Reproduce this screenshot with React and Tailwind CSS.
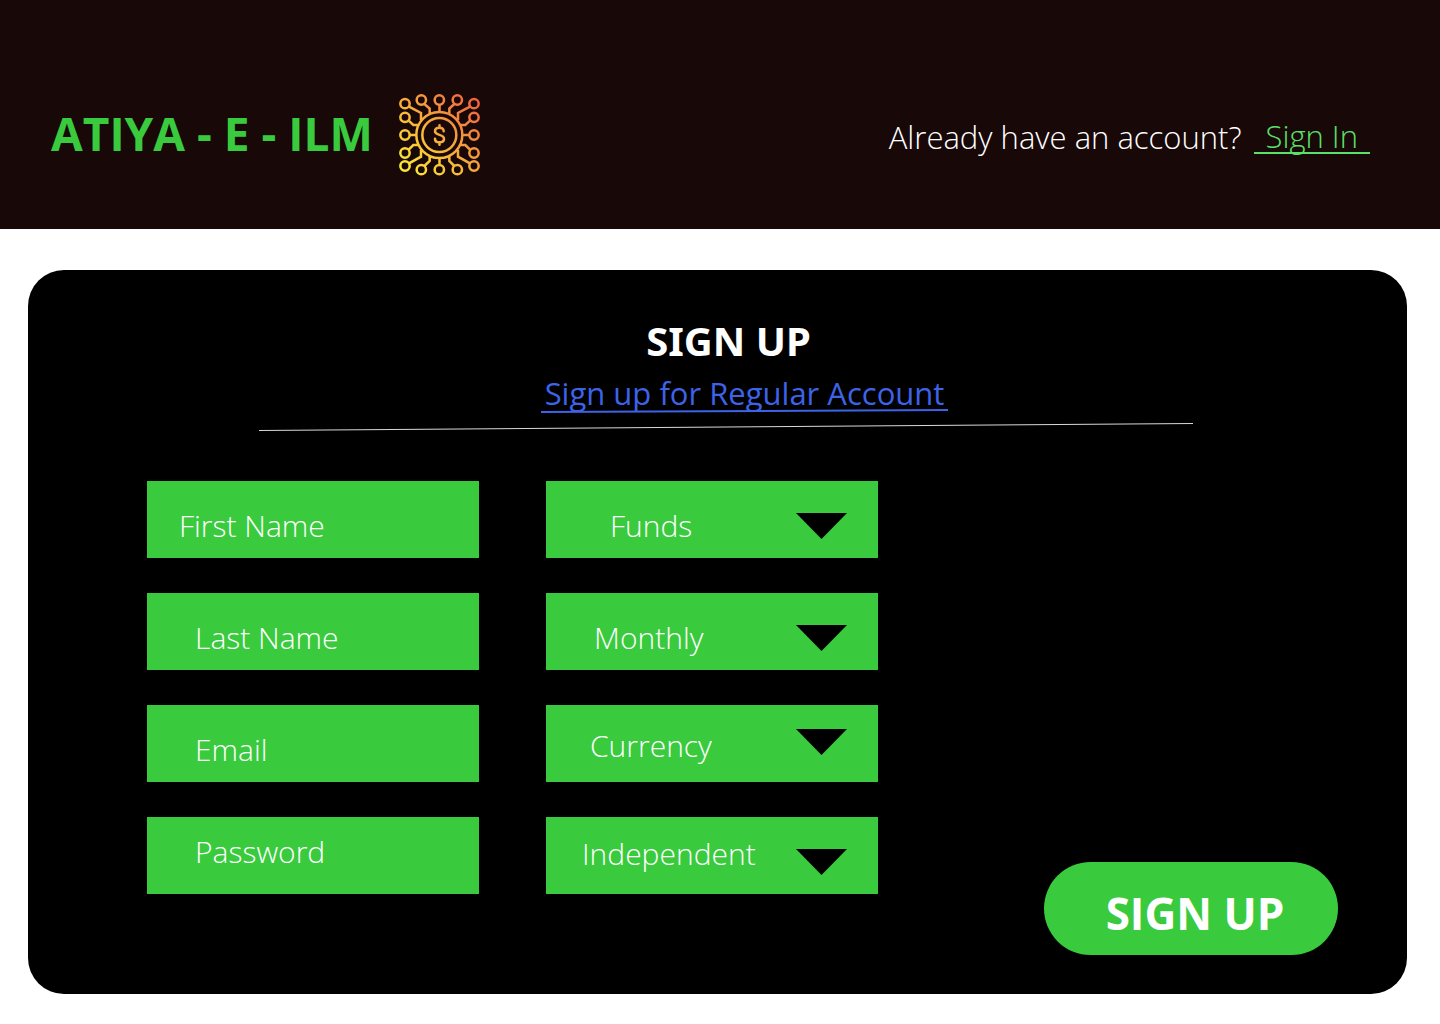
const textFields = [
  { id: 'first-name', label: 'First Name', type: 'text', pad: 'pl-8 pt-3' },
  { id: 'last-name', label: 'Last Name', type: 'text', pad: 'pl-12 pt-3' },
  { id: 'email', label: 'Email', type: 'email', pad: 'pl-12 pt-3' },
  { id: 'password', label: 'Password', type: 'password', pad: 'pl-12 pb-2' },
];

const selectFields = [
  { id: 'funds', label: 'Funds', pad: 'pl-16 pt-3', arrow: 'top-8' },
  { id: 'frequency', label: 'Monthly', pad: 'pl-12 pt-3', arrow: 'top-8' },
  { id: 'currency', label: 'Currency', pad: 'pl-11 pt-1', arrow: 'top-6' },
  { id: 'dependency', label: 'Independent', pad: 'pl-9 pb-1', arrow: 'top-8' },
];

const nodes = [
  [45, 56], [94, 45], [148, 45], [202, 45], [252, 56],
  [45, 97], [252, 97], [45, 150], [252, 150], [45, 204], [252, 204],
  [45, 243], [94, 254], [148, 254], [202, 254], [252, 243],
];

function CoinNetwork() {
  return (
    <svg viewBox="27 27 246 246" className="size-[82px] shrink-0" fill="none" aria-hidden="true">
      <defs>
        <linearGradient id="coin" x1="35" y1="260" x2="265" y2="40" gradientUnits="userSpaceOnUse">
          <stop offset="0" stopColor="#fbee32" />
          <stop offset="0.45" stopColor="#f8b13b" />
          <stop offset="1" stopColor="#f15d42" />
        </linearGradient>
      </defs>
      <g stroke="url(#coin)" strokeWidth="7.5">
        {nodes.map(([x, y]) => (
          <circle key={`${x}-${y}`} cx={x} cy={y} r="14" />
        ))}
        <circle cx="148" cy="150" r="69" />
        <circle cx="148" cy="150" r="51" />
        <path d="M57 65 93 84V105M103 57 119 71V86M148.5 59V82M193 57 178 71V86M240 65 204 84V105M56 107 70 120H86M240 107 226 120H211M59 150H79M238 150H217M56 194 70 180H86M240 194 226 180H211M57 235 93 215V194M103 243 119 228V213M148.500 240V217M193 243 178 228V213M240 235 204 215V194" />
        <path strokeLinecap="round" d="M161 139C161 130 155 128 148 128 140 128 135 132 135 139 135 153 162 146 162 161 162 168 156 172 148 172 140 172 135 168 135 161M148.500 121V128M148.500 172V179" />
      </g>
    </svg>
  );
}

export default function App() {
  return (
    <div className="min-h-screen bg-white pb-[30px] font-['Open_Sans','Noto_Sans',sans-serif]">
      <header className="flex h-[229px] items-center justify-between bg-[#180808] pr-[70px] pl-[51px] pt-10">
        <div className="flex items-center gap-[26px]">
          <span className="whitespace-nowrap pb-1 text-[46px] leading-none font-bold text-[#3aca3e]">ATIYA - E - ILM</span>
          <CoinNetwork />
        </div>
        <p className="flex items-center gap-3 whitespace-nowrap text-[31px] leading-9 font-light text-white">
          <span className="pt-1">Already have an account?</span>
          <a href="#sign-in" className="mt-1 border-b-2 border-[#5be067] px-3 leading-8 text-[#5be067]">Sign In</a>
        </p>
      </header>

      <main className="mt-[41px] mr-[33px] ml-7 rounded-[36px] bg-black pt-12 pb-[39px]">
        <div className="ml-[22px] flex flex-col items-center">
          <h1 className="font-['Noto_Sans',sans-serif] text-[40px] leading-[46px] font-bold text-white">SIGN UP</h1>
          <a href="#regular" className="relative mt-[9px] ml-8 whitespace-nowrap px-1 text-[31px] leading-10 text-[#3d63e8]">
            Sign up for Regular Account
            <svg className="absolute bottom-0 left-0 h-1 w-full" viewBox="0 0 403 4" preserveAspectRatio="none" aria-hidden="true">
              <path d="M0 3 403 1" stroke="#3d63e8" strokeWidth="2" />
            </svg>
          </a>
        </div>
        <svg className="mt-[10px] mr-[214px] ml-[231px] h-2 w-[calc(100%-445px)]" viewBox="0 0 934 8" preserveAspectRatio="none" aria-hidden="true">
          <path d="M0 7.500 934 .5" stroke="#d9d9d9" strokeWidth="1" />
        </svg>

        <form className="mt-[50px] flex justify-between pr-[69px] pl-[119px]" onSubmit={(e) => e.preventDefault()}>
          <div className="mb-[61px] flex gap-[67px]">
            <div className="flex flex-col gap-[35px]">
              {textFields.map((f) => (
                <input
                  key={f.id}
                  id={f.id}
                  type={f.type}
                  aria-label={f.label}
                  placeholder={f.label}
                  className={`h-[77px] w-[332px] bg-[#3aca3e] text-[30px] font-light text-white placeholder:text-white ${f.pad}`}
                />
              ))}
            </div>
            <div className="flex flex-col gap-[35px]">
              {selectFields.map((f) => (
                <div key={f.id} className="relative">
                  <select
                    id={f.id}
                    aria-label={f.label}
                    className={`block h-[77px] w-[332px] appearance-none bg-[#3aca3e] text-[30px] font-light text-white ${f.pad}`}
                  >
                    <option>{f.label}</option>
                  </select>
                  <svg className={`pointer-events-none absolute right-[31px] h-[26px] w-[51px] ${f.arrow}`} viewBox="0 0 51 26" aria-hidden="true">
                    <path d="M0 0H51L25.500 26Z" fill="#000" />
                  </svg>
                </div>
              ))}
            </div>
          </div>
          <button type="submit" className="h-[93px] w-[294px] self-end rounded-full bg-[#3aca3e] pt-2 pl-2 text-[44px] leading-none font-bold text-white">
            SIGN UP
          </button>
        </form>
      </main>
    </div>
  );
}
